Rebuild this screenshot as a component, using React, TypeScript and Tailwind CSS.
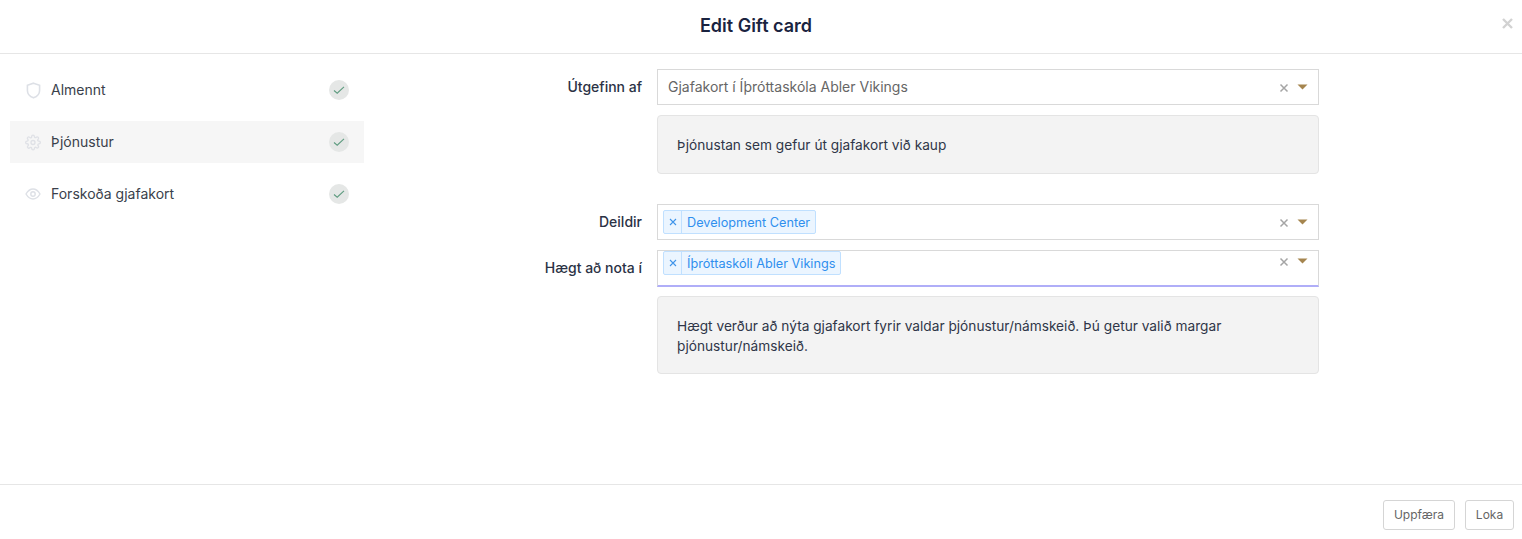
import React from "react";

const font = { fontFamily: "Inter, 'Open Sans', sans-serif" };

function Check() {
  return (
    <span className="flex h-5 w-5 items-center justify-center rounded-full bg-[#e5e7e6]">
      <svg width="12" height="12" viewBox="0 0 12 12" fill="none" stroke="#5f9c80" strokeWidth="1.1" className="-mt-px">
        <path d="M1 6.5 L4.2 9.2 L11 2.8" />
      </svg>
    </span>
  );
}

function Shield() {
  return (
    <svg width="15" height="17" viewBox="0 0 16 18" fill="none" stroke="#dde0e6" strokeWidth="1.7">
      <path d="M8 1.2 L14.5 3.4 V9 C14.5 13 11.5 15.5 8 16.8 C4.5 15.5 1.5 13 1.5 9 V3.4 Z" />
    </svg>
  );
}

function Gear() {
  return (
    <svg width="17" height="17" viewBox="0 0 24 24" fill="none" stroke="#dfe1e6" strokeWidth="2">
      <circle cx="12" cy="12" r="3" />
      <path d="M19.4 15a1.65 1.65 0 0 0 .33 1.82l.06.06a2 2 0 1 1-2.83 2.83l-.06-.06a1.65 1.65 0 0 0-2.82 1.17V21a2 2 0 1 1-4 0v-.09a1.65 1.65 0 0 0-2.82-1.12l-.06.06a2 2 0 1 1-2.83-2.83l.06-.06A1.65 1.65 0 0 0 3.09 14H3a2 2 0 1 1 0-4h.09a1.65 1.65 0 0 0 1.12-2.82l-.06-.06a2 2 0 1 1 2.83-2.83l.06.06A1.65 1.65 0 0 0 10 3.09V3a2 2 0 1 1 4 0v.09a1.65 1.65 0 0 0 2.82 1.12l.06-.06a2 2 0 1 1 2.83 2.83l-.06.06A1.65 1.65 0 0 0 20.91 10H21a2 2 0 1 1 0 4h-.09a1.65 1.65 0 0 0-1.51 1z" />
    </svg>
  );
}

function Eye() {
  return (
    <svg width="16" height="12" viewBox="0 0 16 12" fill="none" stroke="#dde0e6" strokeWidth="1.4">
      <path d="M1 6 C3 2.6 5.3 1 8 1 C10.7 1 13 2.6 15 6 C13 9.4 10.7 11 8 11 C5.3 11 3 9.4 1 6 Z" />
      <circle cx="8" cy="6" r="2.2" />
    </svg>
  );
}

function NavItem({ icon, label, active }: { icon: React.ReactNode; label: string; active?: boolean }) {
  return (
    <div className={`flex h-[42px] items-center justify-between px-[15px] ${active ? "bg-[#f6f6f6]" : ""}`}>
      <div className="flex items-center">
        <span className="flex w-4 justify-center">{icon}</span>
        <span className="-mt-[2px] ml-[10px] text-[14px] text-[#3a3f4b]">{label}</span>
      </div>
      <Check />
    </div>
  );
}

function Controls({ top }: { top?: boolean }) {
  return (
    <div className={`flex items-center pr-[10px] ${top ? "self-start pt-[5px]" : ""}`}>
      <svg width="10" height="10" viewBox="0 0 10 10" stroke="#a5a5a5" strokeWidth="1.5" className="mr-[8px] mt-[1px]">
        <path d="M1.5 1.5 L8.5 8.5 M8.5 1.5 L1.5 8.5" />
      </svg>
      <svg width="11" height="6" viewBox="0 0 11 6" fill="#a5854f" className="mb-[1px]">
        <path d="M0.5 0.5 H10.5 L5.5 5.5 Z" />
      </svg>
    </div>
  );
}

function Tag({ label }: { label: string }) {
  return (
    <span className="flex h-6 items-stretch rounded-[2px] border border-[#c0e0ff] bg-[#ebf5ff] text-[12.7px] text-[#2f8fee]">
      <span className="flex w-[18px] items-center justify-center border-r border-[#c0e0ff]">
        <svg width="8" height="8" viewBox="0 0 8 8" stroke="#3f94ea" strokeWidth="1.1">
          <path d="M1 1 L7 7 M7 1 L1 7" />
        </svg>
      </span>
      <span className="flex items-center px-[5px] pt-[2px]">{label}</span>
    </span>
  );
}

function Row({ label, children, className }: { label: string; children: React.ReactNode; className?: string }) {
  return (
    <div className={`flex ${className ?? ""}`}>
      <div className="w-[277px] shrink-0 pr-[15px] text-right text-[14px] font-medium text-[#2b3245]">{label}</div>
      <div className="w-[662px] shrink-0">{children}</div>
    </div>
  );
}

function Info({ children, className }: { children: React.ReactNode; className?: string }) {
  return (
    <div className={`rounded-[4px] border border-[#e4e4e4] bg-[#f3f3f3] px-[19px] text-[13.7px] leading-[20px] text-[#2f3648] ${className ?? ""}`}>
      {children}
    </div>
  );
}

export default function App() {
  return (
    <div className="flex h-[539px] w-[1522px] flex-col overflow-hidden bg-white" style={font}>
      <header className="relative flex h-[54px] shrink-0 items-center justify-center border-b border-[#e6e6e6] pb-[2px]">
        <h1 className="mr-[10px] text-[18px] font-semibold text-[#1a2340]">Edit Gift card</h1>
        <svg width="11" height="11" viewBox="0 0 11 11" stroke="#d2d2d2" strokeWidth="2.4" className="absolute right-[9px] top-[18px]">
          <path d="M1 1 L10 10 M10 1 L1 10" />
        </svg>
      </header>

      <main className="flex flex-1 pt-[15px]">
        <nav className="ml-[10px] flex w-[354px] shrink-0 flex-col gap-[10px]">
          <NavItem icon={<Shield />} label="Almennt" />
          <NavItem icon={<Gear />} label="Þjónustur" active />
          <NavItem icon={<Eye />} label="Forskoða gjafakort" />
        </nav>

        <section className="ml-[16px] flex flex-col">
          <Row label="Útgefinn af" className="leading-[36px]">
            <div className="flex h-9 items-center justify-between border border-[#d9d9d9] bg-white pl-[10px] text-[14px] text-[#666666]">
              <span>Gjafakort í Íþróttaskóla Abler Vikings</span>
              <Controls />
            </div>
            <Info className="mt-[10px] flex h-[59px] items-center">Þjónustan sem gefur út gjafakort við kaup</Info>
          </Row>

          <Row label="Deildir" className="mt-[30px] leading-[36px]">
            <div className="flex h-9 items-center justify-between border border-[#d9d9d9] bg-white pl-[5px]">
              <Tag label="Development Center" />
              <Controls />
            </div>
          </Row>

          <Row label="Hægt að nota í" className="mt-[10px] leading-[36px]">
            <div className="flex h-[37px] justify-between border border-b-2 border-[#d9d9d9] border-b-[#b0aef8] bg-white pl-[5px]">
              <Tag label="Íþróttaskóli Abler Vikings" />
              <Controls top />
            </div>
            <Info className="mt-[9px] flex h-[78px] items-center pt-[1px]">
              Hægt verður að nýta gjafakort fyrir valdar þjónustur/námskeið. Þú getur valið margar þjónustur/námskeið.
            </Info>
          </Row>
        </section>
      </main>

      <footer className="flex h-[55px] shrink-0 items-start justify-end gap-[10px] border-t border-[#e6e6e6] pr-2 pt-[15px]">
        <button className="h-[30px] w-[72px] rounded-[3px] border border-[#d5d5d5] bg-white text-[12px] text-[#666666]">Uppfæra</button>
        <button className="h-[30px] w-[49px] rounded-[3px] border border-[#d5d5d5] bg-white text-[12px] text-[#666666]">Loka</button>
      </footer>
    </div>
  );
}
